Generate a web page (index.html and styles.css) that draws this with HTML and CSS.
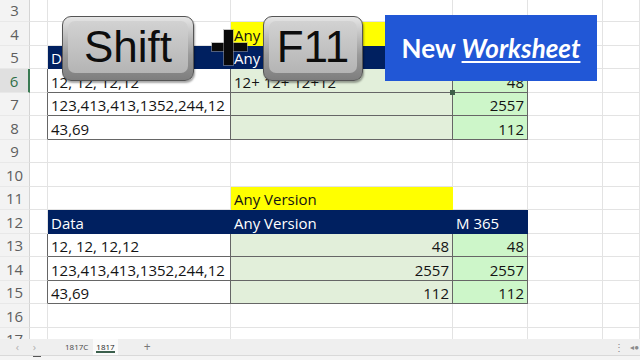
FILE: index.html
```html
<!DOCTYPE html>
<html>
<head>
<meta charset="utf-8">
<link rel="stylesheet" href="styles.css">
</head>
<body>
<div class="screen">
  <div class="sheet">
    <div class="rh">3</div><div></div><div></div><div></div><div></div><div></div><div></div>
    <div class="rh">4</div><div></div><div></div><div class="y">Any Version</div><div></div><div></div><div></div>
    <div class="rh">5</div><div></div><div class="nv">Data</div><div class="nv">Any Version</div><div class="nv">M 365</div><div></div><div></div>
    <div class="rh sel">6</div><div class="tl"></div><div class="tb">12, 12, 12,12</div><div class="tb g1">12+ 12+ 12+12</div><div class="tb g2 num">48</div><div></div><div></div>
    <div class="rh">7</div><div class="tl"></div><div class="tb">123,413,413,1352,244,12</div><div class="tb g1"></div><div class="tb g2 num">2557</div><div></div><div></div>
    <div class="rh">8</div><div class="tl"></div><div class="tb">43,69</div><div class="tb g1"></div><div class="tb g2 num">112</div><div></div><div></div>
    <div class="rh">9</div><div></div><div></div><div></div><div></div><div></div><div></div>
    <div class="rh">10</div><div></div><div></div><div></div><div></div><div></div><div></div>
    <div class="rh">11</div><div></div><div></div><div class="y">Any Version</div><div></div><div></div><div></div>
    <div class="rh">12</div><div></div><div class="nv">Data</div><div class="nv">Any Version</div><div class="nv">M 365</div><div></div><div></div>
    <div class="rh">13</div><div class="tl"></div><div class="tb">12, 12, 12,12</div><div class="tb g1 num">48</div><div class="tb g2 num">48</div><div></div><div></div>
    <div class="rh">14</div><div class="tl"></div><div class="tb">123,413,413,1352,244,12</div><div class="tb g1 num">2557</div><div class="tb g2 num">2557</div><div></div><div></div>
    <div class="rh">15</div><div class="tl"></div><div class="tb">43,69</div><div class="tb g1 num">112</div><div class="tb g2 num">112</div><div></div><div></div>
    <div class="rh">16</div><div></div><div></div><div></div><div></div><div></div><div></div>
    <div class="rh">17</div><div></div><div></div><div></div><div></div><div></div><div></div>
  </div>
  <div class="tabbar">
    <span class="nav first">&lsaquo;</span>
    <span class="nav">&rsaquo;</span>
    <span class="tab tab1">1817C</span>
    <span class="tab active">1817</span>
    <span class="plus-tab">+</span>
    <span class="spacer"></span>
    <span class="dots">&#8942;</span>
    <span class="scroll">&#9666;&#9679;</span>
  </div>
  <div class="bottomstrip"><span class="mark"></span></div>

  <div class="handle"></div>
  <div class="key shift"><div class="face">Shift</div></div>
  <div class="plus"></div>
  <div class="key f11"><div class="face">F11</div></div>
  <div class="banner">New <em>Worksheet</em></div>
</div>
</body>
</html>
```
FILE: styles.css
```css
html, body {
  margin: 0;
  padding: 0;
  background: #ffffff;
}
.screen {
  position: relative;
  width: 640px;
  height: 360px;
  overflow: hidden;
  display: flex;
  flex-direction: column;
  font-family: "Open Sans", "Noto Sans", sans-serif;
}
.sheet {
  margin-top: -1px;
  height: 340px;
  flex: none;
  overflow: hidden;
  display: grid;
  grid-template-columns: 30px 18px 183px 222px 75px 75px 1fr;
  grid-template-rows: 23px 24px 23px 24px 23px 24px 23px 24px 23px 24px 23px 24px 23px 24px 23px;
  font-size: 15px;
  color: #141414;
}
.sheet > div {
  box-sizing: border-box;
  border-right: 1px solid #e3e3e3;
  border-bottom: 1px solid #e3e3e3;
  display: flex;
  align-items: flex-end;
  padding: 0 3px 0 3px;
  white-space: nowrap;
  overflow: hidden;
  line-height: 20px;
}
.sheet > .rh {
  background: #f3f3f3;
  border-right-color: #d4d4d4;
  border-bottom-color: #e8e8e8;
  justify-content: center;
  align-items: center;
  color: #5e5e5e;
  padding: 0;
}
.sheet > .rh.sel {
  background: #e0e0e0;
  color: #2f6f47;
  border-right: 2px solid #3a7a52;
}
.sheet > .y {
  background: #ffff00;
  border-color: #ffff00;
}
.sheet > .nv {
  background: #002060;
  border-color: #002060;
  color: #ffffff;
}
.sheet > .tl {
  border-right-color: #666666;
}
.sheet > .tb {
  border-right-color: #666666;
  border-bottom-color: #666666;
}
.sheet > .g1 {
  background: #e2efda;
}
.sheet > .g2 {
  background: #cdf6c9;
}
.sheet > .num {
  justify-content: flex-end;
}

.tabbar {
  height: 16px;
  flex: none;
  background: #efefef;
  display: flex;
  align-items: center;
  font-size: 8px;
  line-height: 14px;
  color: #444;
}
.nav {
  color: #b0b0b0;
  font-size: 11px;
  width: 17px;
  text-align: center;
}
.nav.first {
  margin-left: 9px;
}
.tab {
  padding: 0 5px;
  height: 16px;
  line-height: 16px;
  box-sizing: border-box;
}
.tab1 {
  margin-left: 17px;
}
.tab.active {
  background: #fafafa;
  color: #222;
  position: relative;
  padding: 0 3px;
}
.tab.active::after {
  content: "";
  position: absolute;
  left: 3px;
  right: 3px;
  bottom: 2px;
  height: 2px;
  background: #3b5f4c;
}
.plus-tab {
  margin-left: 26px;
  color: #777;
  font-size: 12px;
}
.spacer {
  flex: 1;
}
.dots {
  color: #888;
  font-size: 10px;
  margin-right: 6px;
}
.scroll {
  color: #8a8a8a;
  font-size: 8px;
  margin-right: 1px;
}
.bottomstrip {
  flex: 1;
  background: #f4f4f4;
  border-top: 1px solid #d9d9d9;
  position: relative;
}
.mark {
  position: absolute;
  left: 33px;
  top: 0;
  width: 8px;
  height: 1px;
  background: #555;
}

.handle {
  position: absolute;
  left: 450px;
  top: 90px;
  width: 5px;
  height: 5px;
  background: #3e5e48;
}

.key {
  position: absolute;
  box-sizing: border-box;
  border: 1px solid #555;
  border-radius: 9px;
  background: linear-gradient(#e6e6e6, #9a9a9a 60%, #7e7e7e);
  padding: 4px 5px 7px 5px;
  display: flex;
  box-shadow: 1px 2px 2px rgba(0,0,0,0.35);
}
.face {
  flex: 1;
  border-radius: 7px;
  background: linear-gradient(#d2d2d2, #b4b4b4);
  display: flex;
  align-items: center;
  justify-content: center;
  font-family: "Liberation Sans", Arial, sans-serif;
  font-size: 44px;
  line-height: 1;
  color: #0d0d0d;
}
.shift {
  left: 62px;
  top: 16px;
  width: 132px;
  height: 65px;
}
.f11 {
  left: 263px;
  top: 16px;
  width: 100px;
  height: 65px;
}
.plus {
  position: absolute;
  left: 212px;
  top: 30px;
  width: 35px;
  height: 35px;
}
.plus::before {
  content: "";
  position: absolute;
  left: 0;
  right: 0;
  top: 13px;
  height: 8px;
  background: #0a0a0a;
  box-shadow: 0 0 0 1px rgba(150,150,150,0.55);
}
.plus::after {
  content: "";
  position: absolute;
  left: 12px;
  width: 9px;
  top: 0;
  bottom: 0;
  background: #0a0a0a;
  box-shadow: 0 0 0 1px rgba(150,150,150,0.55);
}
.banner {
  position: absolute;
  left: 385px;
  top: 15px;
  width: 212px;
  height: 66px;
  background: #2157d6;
  color: #ffffff;
  display: flex;
  align-items: center;
  justify-content: center;
  font-family: Lato, "Open Sans", sans-serif;
  font-weight: 700;
  font-size: 26px;
  white-space: pre;
}
.banner em {
  font-style: italic;
  text-decoration: underline;
  text-decoration-thickness: 2px;
  text-underline-offset: 3px;
}
```
